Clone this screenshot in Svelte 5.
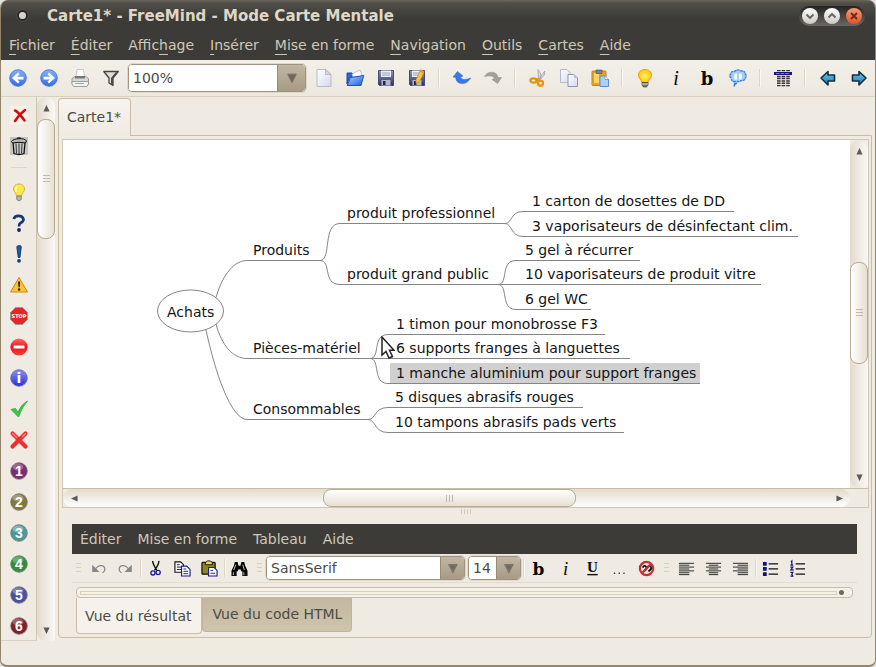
<script>
  const menus = [
    ['', 'F', 'ichier'], ['', 'É', 'diter'], ['Affic', 'h', 'age'], ['', 'I', 'nsérer'],
    ['', 'M', 'ise en forme'], ['', 'N', 'avigation'], ['', 'O', 'utils'], ['', 'C', 'artes'], ['', 'A', 'ide']
  ];
  const toolsLeft = [['back', 'Précédent'], ['forward', 'Suivant'], ['print', 'Imprimer'], ['filter', 'Filtrer']];
  const toolsRight = [
    ['new', 'Nouveau'], ['open', 'Ouvrir'], ['save', 'Enregistrer'], ['saveas', 'Enregistrer sous'], null,
    ['undo', 'Annuler'], ['redo', 'Rétablir'], null,
    ['cut', 'Couper'], ['copy', 'Copier'], ['paste', 'Coller'], null,
    ['bulb', 'Nœud'], ['italic', 'Italique'], ['bold', 'Gras'], ['cloud', 'Nuage'], null,
    ['table', 'Attributs'], null,
    ['left', 'Gauche'], ['right', 'Droite']
  ];
  const sideIcons = [
    ['delete', 'Retirer la dernière icône'], ['trash', 'Retirer toutes les icônes'], null,
    ['idea', 'Idée'], ['help', 'Question'], ['important', 'Important'], ['warning', 'Attention'],
    ['stop', 'Stop'], ['forbidden', 'Interdit'], ['info', 'Information'], ['check', 'Correct'], ['wrong', 'Incorrect'],
    ['n1', 'Priorité 1'], ['n2', 'Priorité 2'], ['n3', 'Priorité 3'], ['n4', 'Priorité 4'],
    ['n5', 'Priorité 5'], ['n6', 'Priorité 6']
  ];
  const ball = { n1: '#7b2d72', n2: '#7f7840', n3: '#4a9a9c', n4: '#2f8f3c', n5: '#4a52a0', n6: '#80202a' };
  const editorMenus = ['Éditer', 'Mise en forme', 'Tableau', 'Aide'];
  const editorTools = [
    'grip', ['undo2', 'Annuler'], ['redo2', 'Rétablir'], null, ['cut2', 'Couper'], ['copy2', 'Copier'],
    ['paste2', 'Coller'], null, ['find', 'Rechercher'], 'grip'
  ];
  const formatTools = [
    null, ['bold', 'Gras'], ['italic', 'Italique'], ['underline', 'Souligné'], ['more', 'Couleur'], ['clear', 'Effacer le format'],
    'grip', ['alignl', 'Aligner à gauche'], ['alignc', 'Centrer'], ['alignr', 'Aligner à droite'], null,
    ['ul', 'Liste à puces'], ['ol', 'Liste numérotée']
  ];

  // Text start, underline level, and underline extent of each branch.
  const nodes = [
    { t: 'Produits', x: 190, y: 120, a: 184, b: 257 },
    { t: 'produit professionnel', x: 284, y: 83, a: 277, b: 442 },
    { t: 'produit grand public', x: 284, y: 144, a: 277, b: 435 },
    { t: '1 carton de dosettes de DD', x: 469, y: 71, a: 460, b: 671 },
    { t: '3 vaporisateurs de désinfectant clim.', x: 469, y: 96, a: 460, b: 735 },
    { t: '5 gel à récurrer', x: 462, y: 120, a: 453, b: 577 },
    { t: '10 vaporisateurs de produit vitre', x: 462, y: 144, a: 435, b: 698 },
    { t: '6 gel WC', x: 462, y: 169, a: 453, b: 528 },
    { t: 'Pièces-matériel', x: 190, y: 218, a: 184, b: 307 },
    { t: '1 timon pour monobrosse F3', x: 333, y: 194, a: 325, b: 542 },
    { t: '6 supports franges à languettes', x: 333, y: 218, a: 307, b: 567 },
    { t: '1 manche aluminium pour support franges', x: 333, y: 243, a: 325, b: 637, selected: true },
    { t: 'Consommables', x: 190, y: 279, a: 184, b: 305 },
    { t: '5 disques abrasifs rouges', x: 332, y: 267, a: 325, b: 520 },
    { t: '10 tampons abrasifs pads verts', x: 332, y: 292, a: 325, b: 561 }
  ];
  const links = [
    [257, 120, 277, 83], [257, 120, 277, 144], [442, 83, 460, 71], [442, 83, 460, 96],
    [435, 144, 453, 120], [435, 144, 453, 169], [307, 218, 325, 194], [307, 218, 325, 243],
    [305, 279, 325, 267], [305, 279, 325, 292]
  ];
  const curve = ([x1, y1, x2, y2]) => {
    const dx = x2 - x1;
    const steep = Math.abs(y2 - y1) > 20;
    const c1 = x1 + dx * (steep ? 0.6 : 0.4);
    const c2 = x2 - dx * (steep ? 0.9 : 0.7);
    return `M${x1} ${y1}.5C${c1} ${y1}.5 ${c2} ${y2}.5 ${x2} ${y2}.5`;
  };
</script>

{#snippet icon(name)}
  <svg class="ic" viewBox="0 0 18 18" aria-hidden="true">
    {#if name === 'back' || name === 'forward'}
      <g transform={name === 'forward' ? 'matrix(-1 0 0 1 18 0)' : null}>
        <circle cx="9" cy="9" r="8.3" fill="url(#gblue)" stroke="#3f6fd4" stroke-width=".8" />
        <path d="M3 9l6-5.500 1.600 1.700L8.200 7.700h6.300v2.700H8.200l2.400 2.300L9 14.500z" fill="#fff" />
      </g>
    {:else if name === 'print'}
      <path d="M5 8L6 .5h6.500l1 7.500z" fill="#fff" stroke="#b5b5b5" stroke-width=".7" />
      <path d="M1 9.500L4 7.500h10.500l3 2v5H1z" fill="#d8d8d4" stroke="#8a8a86" stroke-width=".8" />
      <path d="M4 7h10v2.500H4z" fill="#777" />
      <path d="M1 12.500h16.500V15l-1.500 2.500H2.500L1 15z" fill="#f2f2f0" stroke="#8e8e8a" stroke-width=".8" />
      <path d="M4 14.500h9" stroke="#aaa" />
    {:else if name === 'filter'}
      <path d="M1.800 2.500h14.500L11 9v7.500l-4-2.500V9z" fill="#dedcd6" stroke="#444" stroke-width="1.300" stroke-linejoin="round" />
      <path d="M9 15V9L13.500 3.500h2L11 9v7z" fill="#4a4a48" />
    {:else if name === 'new'}
      <path d="M2 .5h8.500l5.500 5v12H2z" fill="url(#gpage)" stroke="#b9bac8" />
      <path d="M10.500 .5v5H16z" fill="#d5d7e6" stroke="#abadc2" stroke-width=".7" />
    {:else if name === 'open'}
      <path d="M1 4h5l1.500 1.500H14V8H3.500L1 15z" fill="#3565cf" stroke="#1d45ad" />
      <path d="M6 5l8-4 2.500 6-9 3z" fill="#fff" stroke="#9bb0dc" stroke-width=".7" />
      <path d="M4.500 8.500L17.700 6.500 15 16.500H1.200z" fill="url(#gfold)" stroke="#1f4dbd" />
    {:else if name === 'save' || name === 'saveas'}
      <path d="M1.500 1.500h15v15h-14l-1-1z" fill="url(#gdisk)" stroke="#454b78" />
      <path d="M4 1.500h10v6.500H4z" fill="#e9edf6" />
      <path d="M5 4h8M5 6h8" stroke="#8d93b0" stroke-width=".8" />
      <path d="M4.500 11h9v5.500h-9z" fill="#b3b6c8" />
      <path d="M6 12h2.500v4H6z" fill="#222547" />
      {#if name === 'saveas'}
        <path d="M12.500 .8l3.700 1.700L11.500 12.500l-3.500 2 .2-4z" fill="#ffc63a" stroke="#d78f18" stroke-width=".7" />
        <path d="M12.500 .8l3.700 1.700-1 1.700-3.600-1.600z" fill="#e88b4d" />
      {/if}
    {:else if name === 'undo'}
      <path d="M0 8L4.500 2.500 10 7 7.500 8.200Q9 12.500 17.800 9 14 15 8.500 14.500 3 14 2.700 8.500z" fill="#3a78ea" stroke="#2b62d0" stroke-width=".5" />
    {:else if name === 'redo'}
      <path d="M.5 7.500Q3 3 8 3.200 13.500 3.700 14 8.500H17.500L13.500 14.500 8 10.500 10.500 9.500Q9 5.500 .5 7.500z" fill="#a0a09d" stroke="#8d8d8a" stroke-width=".5" />
    {:else if name === 'cut'}
      <path d="M9 11L15.800 2l-.5 4-5.500 6zM9.500 11.500L9 .5l2.500 4L12 9z" fill="#d5d9e8" stroke="#9599ae" stroke-width=".7" />
      <g fill="none" stroke="#e8930e" stroke-width="2.300"><ellipse cx="4.500" cy="11.500" rx="3" ry="2.100" /><ellipse cx="11.500" cy="14.200" rx="2.500" ry="2.500" /><path d="M7 11l3.500-1.500M10.300 12.500L9 10" /></g>
    {:else if name === 'copy'}
      <path d="M.5.5H7l3 3v10H.5z" fill="url(#gpage)" stroke="#b4b5d0" />
      <path d="M8 5.500h6l3.500 3.500v8.500H8z" fill="url(#gpage)" stroke="#8f91b8" />
      <path d="M14 5.500v3.500h3.500z" fill="#babde0" />
    {:else if name === 'paste'}
      <rect x="1" y="2" width="14" height="14.500" rx="1" fill="#f0a21c" stroke="#c07e20" />
      <path d="M3 4h5v10H3z" fill="#ffd465" />
      <path d="M5 1h6v3.500H5z" fill="#79808f" stroke="#555c6e" stroke-width=".7" />
      <path d="M9 7h5l3.500 3.500v7H9z" fill="#a9d2f8" stroke="#5b8fd0" />
      <path d="M14 7v3.500h3.500" fill="#fff" stroke="#5b8fd0" stroke-width=".7" />
    {:else if name === 'bulb'}
      <path d="M9 .5c4 0 6.500 2.500 6.500 5.500 0 3.200-2.800 4.500-3.300 7.500H5.800c-.5-3-3.300-4.300-3.300-7.500C2.500 3 5 .5 9 .5z" fill="url(#gbulb)" stroke="#e8a01c" />
      <path d="M6 13.500h6V16l-1.500 2h-3L6 16z" fill="#777" stroke="#333" stroke-width=".7" />
      <path d="M6 15h6" stroke="#ddd" />
    {:else if name === 'italic'}
      <text x="9" y="16" text-anchor="middle" class="serif it">i</text>
    {:else if name === 'bold'}
      <text x="9" y="16" text-anchor="middle" class="serif bo">b</text>
    {:else if name === 'underline'}
      <text x="9" y="12.500" text-anchor="middle" class="serif un">U</text>
      <path d="M3.500 15.500h11" stroke="#111" stroke-width="1.500" />
    {:else if name === 'cloud'}
      <path d="M5.500 2.500Q9-.5 12 2q4-.5 4 2.500 2.500 2.500 0 5-.5 2.500-4 2-1.500 1.500-3.500 1L5 17.500l1-5Q2.500 13 2.300 9.500-.5 7 1.800 4.800 2 2 5.500 2.500z" fill="#a4cffa" stroke="#377fe0" stroke-width="1.300" stroke-dasharray="2.500 .6" />
      <path d="M5.500 4.500q-1 3 0 6H8v-6zM10 4.500v6h2.500q1-3 0-6z" fill="#f4faff" />
    {:else if name === 'table'}
      <path d="M3 1.700h13M3 7.500h13" stroke="#333" stroke-width="1.300" stroke-dasharray="3.600 1" />
      <path d="M0 4.500h18" stroke="#16167d" stroke-width="3.200" />
      <path d="M2 4.500h14" stroke="#8d8dd0" stroke-width=".8" stroke-dasharray="3.600 1" />
      <path d="M3 9.500h13M3 12h13M3 14.300h13M3 16.600h13" stroke="#333" stroke-width="1.400" stroke-dasharray="3.600 1" />
    {:else if name === 'left' || name === 'right'}
      <path transform={name === 'right' ? 'matrix(-1 0 0 1 18 0)' : null} d="M2 9L9 2.500V6h6.500v6H9v4z" fill="url(#garrow)" stroke="#13303f" stroke-width="1.600" stroke-linejoin="round" />
    {:else if name === 'delete'}
      <path d="M0 0h18v18H0z" fill="#f6f2ea" />
      <path d="M5 4.500q3 1 9.500 10M15 4Q9.500 8 5 15" stroke="#cf0b0b" stroke-width="2.600" fill="none" stroke-linecap="round" />
    {:else if name === 'trash'}
      <path d="M0 0h18v18H0z" fill="#c4c3be" />
      <path d="M3 5h12l-1 11.500q-5 2-10 0z" fill="#c9c9c7" stroke="#111" stroke-width="1.300" />
      <path d="M6 6.500l.5 10M9 6.500V17M12 6.500l-.5 10" stroke="#333" stroke-width="1" />
      <path d="M1.500 4.500Q3 2 9 1.700T16.500 4l-1 2Q9 4.500 2.500 6z" fill="#b9b9b7" stroke="#111" />
      <path d="M7 1.500q2-1.500 4 0" fill="none" stroke="#111" stroke-width="1.200" />
    {:else if name === 'idea'}
      <path d="M9 1c3.600 0 5.500 2.200 5.500 5 0 3-2.800 4-3 7h-5c-.2-3-3-4-3-7 0-2.800 1.900-5 5.500-5z" fill="#ffe93b" stroke="#c6b667" />
      <path d="M7 3.500q-2.500 2-.5 5" stroke="#fffcd0" stroke-width="1.500" fill="none" />
      <path d="M6.800 13h4.400v3.500L9 18l-2.200-1.500z" fill="#b9bba6" stroke="#6d6e62" stroke-width=".8" />
    {:else if name === 'help'}
      <path d="M3.800 5Q4.500 1.800 8.500 1.800t5 3.400Q13.500 7.500 10.500 9 8.800 10 9 12.500" fill="none" stroke="#17376f" stroke-width="2.700" />
      <circle cx="9" cy="16" r="1.900" fill="#0e2556" />
    {:else if name === 'important'}
      <path d="M6.800 2q0-1.500 2.300-1.500T11.300 2L10 12.500H8.200z" fill="#1f5d9b" stroke="#0b2d5a" stroke-width=".8" />
      <circle cx="9" cy="15.800" r="1.900" fill="#123f77" />
    {:else if name === 'warning'}
      <path d="M9 1.500L17.500 16H.5z" fill="#fbc436" stroke="#d7840e" stroke-linejoin="round" />
      <path d="M8 5.500h2.200l-.5 5.700H8.500z" fill="#222" /><circle cx="9.100" cy="13.500" r="1.200" fill="#222" />
    {:else if name === 'stop'}
      <path d="M5.500.5h7l5 5v7l-5 5h-7l-5-5v-7z" fill="#e52528" stroke="#999" />
      <text x="9" y="11.200" text-anchor="middle" class="stop">STOP</text>
    {:else if name === 'forbidden'}
      <circle cx="9" cy="9" r="8.600" fill="url(#gred)" /><rect x="3.500" y="7.500" width="11" height="3" rx=".5" fill="#fff" />
    {:else if name === 'info'}
      <circle cx="9" cy="9" r="8.300" fill="url(#ginfo)" stroke="#6469ae" stroke-width=".8" />
      <text x="9" y="14" text-anchor="middle" class="inf">i</text>
    {:else if name === 'check'}
      <path d="M1 9.500l4.500-1 2.500 4Q11 4.500 17.500 1 12 7 8.500 17z" fill="#31cf3c" stroke="#3d9a41" stroke-width=".8" stroke-linejoin="round" />
    {:else if name === 'wrong'}
      <path d="M2.500 2.500l13 13M15.500 2.500l-13 13" stroke="#ee2d2d" stroke-width="4.200" stroke-linecap="round" />
      <path d="M2.500 2.500l4 4M15.500 2.500l-3 3" stroke="#f58a86" stroke-width="1.500" stroke-linecap="round" />
    {:else if ball[name]}
      <circle cx="9" cy="9" r="8.300" fill={ball[name]} stroke="#777" stroke-width=".8" />
      <ellipse cx="8" cy="5" rx="5.500" ry="3.500" fill="#fff" opacity=".28" />
      <text x="9" y="14" text-anchor="middle" class="num">{name[1]}</text>
    {:else if name === 'undo2' || name === 'redo2'}
      <g transform={name === 'redo2' ? 'matrix(-1 0 0 1 18 0)' : null} stroke="#888" stroke-width="1.300" fill="none">
        <path d="M5 10.500Q8.500 5 12.500 6t3 5q-.5 2-2.500 2.500" /><path d="M3 6.500V12h5.500z" fill="#888" />
      </g>
    {:else if name === 'cut2'}
      <path d="M6 1q0 3 4.500 10M12.500 1q.5 3-4.500 10" stroke="#111" stroke-width="1.500" fill="none" />
      <g fill="none" stroke="#1a1a9c" stroke-width="1.400"><circle cx="6.300" cy="13.700" r="2.200" /><circle cx="11.800" cy="13.200" r="2.200" /></g>
    {:else if name === 'copy2'}
      <path d="M1 2h6l3 3v8H1z" fill="#fff" stroke="#111" stroke-width="1.200" /><path d="M3 5h3M3 7.500h5M3 10h5" stroke="#111" />
      <path d="M8 6.500h5.500l3.500 3.500v7H8z" fill="#fff" stroke="#181899" stroke-width="1.200" /><path d="M10 9.500h3M10 12h5M10 14.500h5" stroke="#181899" />
    {:else if name === 'paste2'}
      <rect x="1" y="2.500" width="14" height="12.500" rx="1" fill="#8d8722" stroke="#111" stroke-width="1.300" />
      <path d="M4.500 5V3L7 1h3l2 2v2z" fill="#e4db4d" stroke="#111" />
      <path d="M8 8h6l3 3v6H8z" fill="#fff" stroke="#181899" stroke-width="1.200" /><path d="M10 11h3M10 14h5" stroke="#181899" />
    {:else if name === 'find'}
      <path d="M4 2h3l1 4h2l1-4h3l1 4 2.500 5.500V17H12v-5h-1.500v-2h-3v2H6v5H.5v-5.500L3 6z" fill="#080808" />
      <path d="M5 5L3 10.500M12.500 5l1.500 5.500M2.500 13v3M13.500 13v3" stroke="#ddd" stroke-width=".9" />
    {:else if name === 'more'}
      <path d="M3 14h12" stroke="#44405c" stroke-width="1.500" stroke-dasharray="1.500 3.500" />
    {:else if name === 'clear'}
      <circle cx="9" cy="9" r="8" fill="#f3e7e2" /><path d="M5 8q1.500-3 3.500-1T6 12M10 8q1.500-3 3.500-1T11 12" stroke="#111" stroke-width="2" fill="none" />
      <circle cx="9" cy="9" r="7" fill="none" stroke="#c43237" stroke-width="2.400" /><path d="M4 14L14 4" stroke="#c43237" stroke-width="2.200" />
    {:else if name === 'alignl'}
      <path d="M1 3.500h16M1 7.500h16M1 11.500h16M1 15.500h11M1 5.500h11M1 9.500h11M1 13.500h11" class="ln" />
    {:else if name === 'alignc'}
      <path d="M1 3.500h16M1 7.500h16M1 11.500h16M4 15.500h10M4 5.500h10M4 9.500h10M4 13.500h10" class="ln" />
    {:else if name === 'alignr'}
      <path d="M1 3.500h16M1 7.500h16M1 11.500h16M6 15.500h11M6 5.500h11M6 9.500h11M6 13.500h11" class="ln" />
    {:else if name === 'ul' || name === 'ol'}
      <path d="M7 4h10M7 9.500h10M7 15h10" stroke="#111" stroke-width="1.300" />
      {#if name === 'ul'}
        <path d="M1 2h4v4H1zM1 7.500h4v4H1zM1 13h4v4H1z" fill="#12127e" />
      {:else}
        <path d="M2 2l1-1v4M1.500 5.500h3M1.500 7.500h2.500L2 10.500h3M1.500 13h2.500l-1 2 1 2H1.500" fill="none" stroke="#12127e" stroke-width="1.300" />
      {/if}
    {/if}
  </svg>
{/snippet}

{#snippet tool(t)}
  {#if t === null}
    <span class="sep"></span>
  {:else if t === 'grip'}
    <span class="grip"></span>
  {:else}
    <button class="tool" aria-label={t[1]}>{@render icon(t[0])}</button>
  {/if}
{/snippet}

{#snippet combo(id, label, value, cls)}
  <span class="combo {cls}">
    <select {id} aria-label={label}><option>{value}</option></select>
    <svg class="drop" viewBox="0 0 28 24" preserveAspectRatio="xMidYMid" aria-hidden="true"><path d="M10 8h9l-4.500 9z" fill="#6d675d" stroke="#7c7568" /></svg>
  </span>
{/snippet}

{#snippet scrollbar(dir, before, size, after)}
  <div class="scroll {dir}">
    <button class="arrow" aria-label={dir === 'v' ? 'Défiler vers le haut' : 'Défiler à gauche'}>
      <svg viewBox="0 0 8 8"><path d={dir === 'v' ? 'M4 0l3.500 7.500h-7z' : 'M0 4l7.500-3.500v7z'} /></svg>
    </button>
    <div style="flex: {before} 1 0"></div>
    <div class="thumb" style="flex: {size} 1 0"><span></span></div>
    <div style="flex: {after} 1 0"></div>
    <button class="arrow" aria-label={dir === 'v' ? 'Défiler vers le bas' : 'Défiler à droite'}>
      <svg viewBox="0 0 8 8"><path d={dir === 'v' ? 'M4 8L.5.500h7z' : 'M8 4L.5.500v7z'} /></svg>
    </button>
  </div>
{/snippet}

<svg class="defs" aria-hidden="true">
  <defs>
    <linearGradient id="gblue" x2="0" y2="1"><stop stop-color="#86b4f8" /><stop offset="1" stop-color="#2f6be2" /></linearGradient>
    <linearGradient id="gpage" x2="1" y2="1"><stop stop-color="#fff" /><stop offset="1" stop-color="#d6d8ee" /></linearGradient>
    <linearGradient id="gfold" x2="1" y2="1"><stop stop-color="#a9d4ff" /><stop offset="1" stop-color="#1c5be0" /></linearGradient>
    <linearGradient id="gdisk" x2="0" y2="1"><stop stop-color="#9097b8" /><stop offset="1" stop-color="#2c315c" /></linearGradient>
    <radialGradient id="gbulb"><stop stop-color="#fff36b" /><stop offset="1" stop-color="#ffc40a" /></radialGradient>
    <linearGradient id="garrow" x2="0" y2="1"><stop stop-color="#6fc8ea" /><stop offset="1" stop-color="#1a78b4" /></linearGradient>
    <linearGradient id="gred" x2="0" y2="1"><stop stop-color="#f7716c" /><stop offset=".5" stop-color="#e81416" /><stop offset="1" stop-color="#f5423d" /></linearGradient>
    <linearGradient id="ginfo" x2="0" y2="1"><stop stop-color="#8b92ea" /><stop offset="1" stop-color="#2832d8" /></linearGradient>
  </defs>
</svg>

<div class="window">
  <header class="title">
    <span class="dot"></span>
    <h1>Carte1* - FreeMind - Mode Carte Mentale</h1>
    <div class="wm">
      <button aria-label="Réduire"><svg viewBox="0 0 16 16"><path d="M4.500 6.500L8 10l3.500-3.500" /></svg></button>
      <button aria-label="Agrandir"><svg viewBox="0 0 16 16"><path d="M4.500 9.500L8 6l3.500 3.500" /></svg></button>
      <button class="close" aria-label="Fermer"><svg viewBox="0 0 16 16"><path d="M5 5l6 6M11 5l-6 6" /></svg></button>
    </div>
  </header>
  <nav class="menubar">
    {#each menus as [pre, key, post]}
      <button>{pre}<u>{key}</u>{post}</button>
    {/each}
  </nav>
  <div class="toolbar">
    {#each toolsLeft as t}{@render tool(t)}{/each}
    {@render combo('zoom', 'Zoom', '100%', 'zoom')}
    {#each toolsRight as t}{@render tool(t)}{/each}
  </div>

  <main>
    <aside>
      {#each sideIcons as t}{@render tool(t)}{/each}
    </aside>
    {@render scrollbar('v', 0, 118, 382)}
    <section class="work">
      <div class="tabs" role="tablist"><button class="tab" role="tab" aria-selected="true">Carte1*</button></div>
      <div class="body">
        <div class="frame">
          <div class="row">
            <div class="map">
              <svg class="lines" width="787" height="348" aria-hidden="true">
                <ellipse cx="127.500" cy="171" rx="33" ry="21" />
                <path d="M153 157.500C160 133 172 120.500 184 120.500" />
                <path d="M153 184C159 206 170 218.500 184 218.500" />
                <path d="M143 190C152 232 168 279.500 184 279.500" />
                {#each links as l}<path d={curve(l)} />{/each}
                {#each nodes as n}<path d="M{n.a} {n.y}.5H{n.b}" />{/each}
              </svg>
              <span class="node" style="left: 104px; top: 162px">Achats</span>
              {#each nodes as n}
                <span class="node" class:selected={n.selected} style="left: {n.x}px; top: {n.y - 20}px">{n.t}</span>
              {/each}
              <svg class="cursor" viewBox="0 0 14 23" aria-hidden="true"><path d="M1 1v18l4-3.500 3 6.500 3.500-1.500-3-6.200H13z" fill="#fff" stroke="#222" stroke-width="1.500" /></svg>
            </div>
            {@render scrollbar('v', 101, 100, 103)}
          </div>
          <div class="row low">
            {@render scrollbar('h', 239, 251, 253)}
            <span class="corner"></span>
          </div>
        </div>
        <div class="split"><span></span></div>
        <div class="editor">
          <nav class="editmenu">
            {#each editorMenus as m}<button>{m}</button>{/each}
          </nav>
          <div class="edittools">
            {#each editorTools as t}{@render tool(t)}{/each}
            {@render combo('font', 'Police', 'SansSerif', 'font')}
            {@render combo('size', 'Taille', '14', 'size')}
            {#each formatTools as t}{@render tool(t)}{/each}
          </div>
          <div class="doc"><span class="line"></span><span class="knob"></span></div>
          <div class="views" role="tablist">
            <button class="view on" role="tab" aria-selected="true">Vue du résultat</button>
            <button class="view" role="tab" aria-selected="false">Vue du code HTML</button>
          </div>
        </div>
      </div>
    </section>
  </main>
  <footer></footer>
</div>

<style>
  :global(body) { margin: 0; background: #e4e2dc; }
  * { box-sizing: border-box; }
  button { font: inherit; color: inherit; background: none; border: 0; padding: 0; margin: 0; white-space: nowrap; }
  .defs { position: absolute; width: 0; height: 0; }
  .window {
    height: 100vh; display: flex; flex-direction: column; overflow: hidden;
    background: #efebe3; border: 1px solid #94866a; border-width: 0 1px 2px;
    border-radius: 8px 8px 7px 7px; font: 14px/20px "DejaVu Sans", sans-serif; color: #4c4a45;
  }
  .title {
    flex: none; height: 31px; display: flex; align-items: center; padding: 0 10px 0 16px;
    background: linear-gradient(#6b675c 0, #504e48 3px, #3c3b37 18px); color: #dfd8c8;
  }
  .dot { width: 11px; height: 11px; border-radius: 50%; background: #d8d4ca; border: 2px solid #2a2926; outline: 1px solid #4c4b47; }
  h1 { margin: 0 0 0 19px; font-size: 15px; line-height: 20px; font-weight: bold; flex: 1; white-space: nowrap; }
  .wm { display: flex; gap: 6px; padding: 2px 3px; border-radius: 10px; background: linear-gradient(#242320, #6a6964); }
  .wm button { width: 16px; height: 16px; border-radius: 50%; background: linear-gradient(#fff, #cbc8c0); }
  .wm svg { display: block; fill: none; stroke: #63615c; stroke-width: 1.8; }
  .wm .close { background: linear-gradient(#f79a77, #e0532a); }
  .wm .close svg { stroke: #6b2a14; }
  .menubar { flex: none; height: 29px; display: flex; gap: 16px; align-items: center; padding: 0 8px 2px; background: #3c3b37; color: #cfc8b8; }
  .menubar u { text-decoration-thickness: 1px; text-underline-offset: 4px; }
  .toolbar { flex: none; height: 37px; display: flex; align-items: center; padding-left: 1px; border-bottom: 1px solid #d9d0be; background: linear-gradient(#f3f0e9, #ede8df); }
  .tool { flex: none; display: flex; align-items: center; justify-content: center; width: 31px; height: 31px; }
  .ic { width: 18px; height: 18px; overflow: visible; }
  .sep { flex: none; width: 14px; height: 18px; background: linear-gradient(90deg, transparent 6px, #ddd5c6 6px, #ddd5c6 7px, #faf8f4 7px, #faf8f4 8px, transparent 8px); }
  .serif { font-family: "DejaVu Serif", serif; fill: #0a0a0a; }
  .it { font-size: 20px; font-style: italic; font-family: "Liberation Serif", serif; }
  .bo { font-size: 18px; font-weight: bold; }
  .un { font-size: 16px; font-weight: bold; font-family: "Liberation Serif", serif; }
  .stop { font: bold 5px "DejaVu Sans", sans-serif; fill: #fff; }
  .inf { font: bold 14px "DejaVu Sans", sans-serif; fill: #fff; }
  .num { font: bold 14px "Liberation Sans", sans-serif; fill: #fff; }
  .ln { stroke: #222; stroke-width: 1; }

  .combo { flex: none; position: relative; display: flex; height: 28px; border: 1px solid #a0947e; border-radius: 4px; overflow: hidden; outline: 1px solid #e0d8c9; outline-offset: 0; }
  .combo select {
    flex: 1; min-width: 0; appearance: none; border: 0; border-radius: 0; outline: 0; padding: 0 4px; margin: 0;
    font: 14px/20px "DejaVu Sans", sans-serif; color: #4c4a45; background: #fff;
  }
  .drop { position: absolute; right: 0; top: 0; width: 28px; height: 100%; background: linear-gradient(#c0b6a3, #a79b86); border-left: 1px solid #988c77; pointer-events: none; }
  .zoom { width: 178px; margin: 0 2px; }
  .font { width: 199px; }
  .size { width: 53px; margin: 0 1px 0 3px; }
  .size .drop, .font .drop { width: 24px; }
  .size .drop path, .font .drop path { stroke-width: 2; }

  main { flex: 1; min-height: 0; display: flex; }
  aside { flex: none; width: 36px; display: flex; flex-direction: column; align-items: center; padding-top: 2px; overflow: hidden; border-right: 1px solid #cfc4b0; border-bottom: 1px solid #d9d0be; }
  aside .sep { width: 16px; height: 15px; background: linear-gradient(transparent 6px, #ddd5c6 6px, #ddd5c6 7px, transparent 7px); }

  .scroll { flex: none; display: flex; background: linear-gradient(90deg, #e2dacc, #faf8f5); }
  .scroll.v { width: 18px; flex-direction: column; border-radius: 9px 9px 4px 9px; }
  .scroll.h { flex: 1; height: 18px; border-radius: 9px; background: linear-gradient(#e2dacc, #fff); }
  .arrow { flex: none; width: 22px; height: 22px; display: flex; align-items: center; justify-content: center; }
  .v .arrow { width: 18px; }
  .h .arrow { height: 18px; }
  .arrow svg { width: 7px; height: 7px; fill: #5c5a55; }
  .thumb { display: flex; align-items: center; justify-content: center; border: 1px solid #b9ab92; border-radius: 8px; background: linear-gradient(90deg, #fff, #e6dfd2); }
  .h .thumb { background: linear-gradient(#fff, #e6dfd2); }
  .thumb span { width: 7px; height: 8px; background: repeating-linear-gradient(#c4b9a4 0 1px, transparent 1px 3px); }
  .h .thumb span { width: 8px; height: 7px; background: repeating-linear-gradient(90deg, #c4b9a4 0 1px, transparent 1px 3px); }

  .work { flex: 1; min-width: 0; display: flex; flex-direction: column; padding: 1px 3px 3px; }
  .tabs { flex: none; display: flex; height: 37px; }
  .tab { padding: 0 9px 2px 8px; border: 1px solid #cabda6; border-bottom: 0; border-radius: 4px 4px 0 0; background: linear-gradient(#f7f4ee, #efebe3); margin-bottom: -1px; z-index: 1; }
  .body { flex: 1; min-height: 0; display: flex; flex-direction: column; border: 1px solid #cabda6; border-radius: 0 0 4px 4px; padding: 3px 2px 3px 3px; }
  .frame { flex: 1; min-height: 0; display: flex; flex-direction: column; border: 1px solid #d2c7b3; }
  .row { flex: 1; min-height: 0; display: flex; }
  .row.low { flex: none; border-top: 1px solid #cabda6; }
  .corner { width: 18px; }
  .map { flex: 1; min-width: 0; position: relative; overflow: hidden; background: #fff; color: #151515; }
  .lines { position: absolute; left: 0; top: 0; fill: none; stroke: #858585; stroke-width: 1; }
  .node { position: absolute; line-height: 20px; white-space: nowrap; }
  .selected { background: #d0d0d0; padding: 0 4px 0 6px; margin-left: -6px; }
  .cursor { position: absolute; left: 318px; top: 196px; width: 14px; height: 23px; }

  .split { flex: none; height: 16px; display: flex; justify-content: center; }
  .split span { width: 10px; height: 5px; background: repeating-linear-gradient(90deg, #d5cbb9 0 1px, transparent 1px 3px); margin-top: 1px; }
  .editor { flex: none; padding: 0 12px 0 10px; }
  .editmenu { display: flex; align-items: center; gap: 16px; height: 30px; padding: 0 8px; background: #3c3b37; color: #cfc8b8; }
  .edittools { display: flex; align-items: center; height: 29px; overflow: hidden; border-bottom: 1px solid #e3dccf; }
  .edittools .tool { width: 27px; height: 27px; }
  .edittools .combo { height: 24px; }
  .edittools .sep { width: 3px; background: linear-gradient(90deg, transparent 1px, #ddd5c6 1px, #ddd5c6 2px, #faf8f4 2px); }
  .edittools .ic { width: 17px; height: 17px; }
  .grip { flex: none; width: 13px; height: 10px; background: repeating-linear-gradient(#d9d0be 0 1px, transparent 1px 4px) 4px 0 / 5px 10px no-repeat; }
  .doc { display: flex; align-items: center; gap: 2px; height: 11px; margin: 4px 4px 0; padding: 0 8px 0 3px; border: 1px solid #cabda6; border-radius: 4px; background: #f4f1eb; }
  .line { flex: 1; height: 4px; border: 1px solid #d8cebc; }
  .knob { width: 5px; height: 5px; border-radius: 50%; background: #6d6a63; }
  .views { display: flex; align-items: flex-start; height: 36px; padding: 0 4px; }
  .view { height: 34px; padding: 0 9px 2px; border: 1px solid #c0b398; border-top: 0; border-radius: 0 0 4px 4px; background: linear-gradient(#c3b79e, #cfc4ad); }
  .view.on { height: 36px; padding: 0 10px 0 8px; border-color: #cabda6; background: #f5f2ec; }
  footer { flex: none; height: 24px; }
</style>
